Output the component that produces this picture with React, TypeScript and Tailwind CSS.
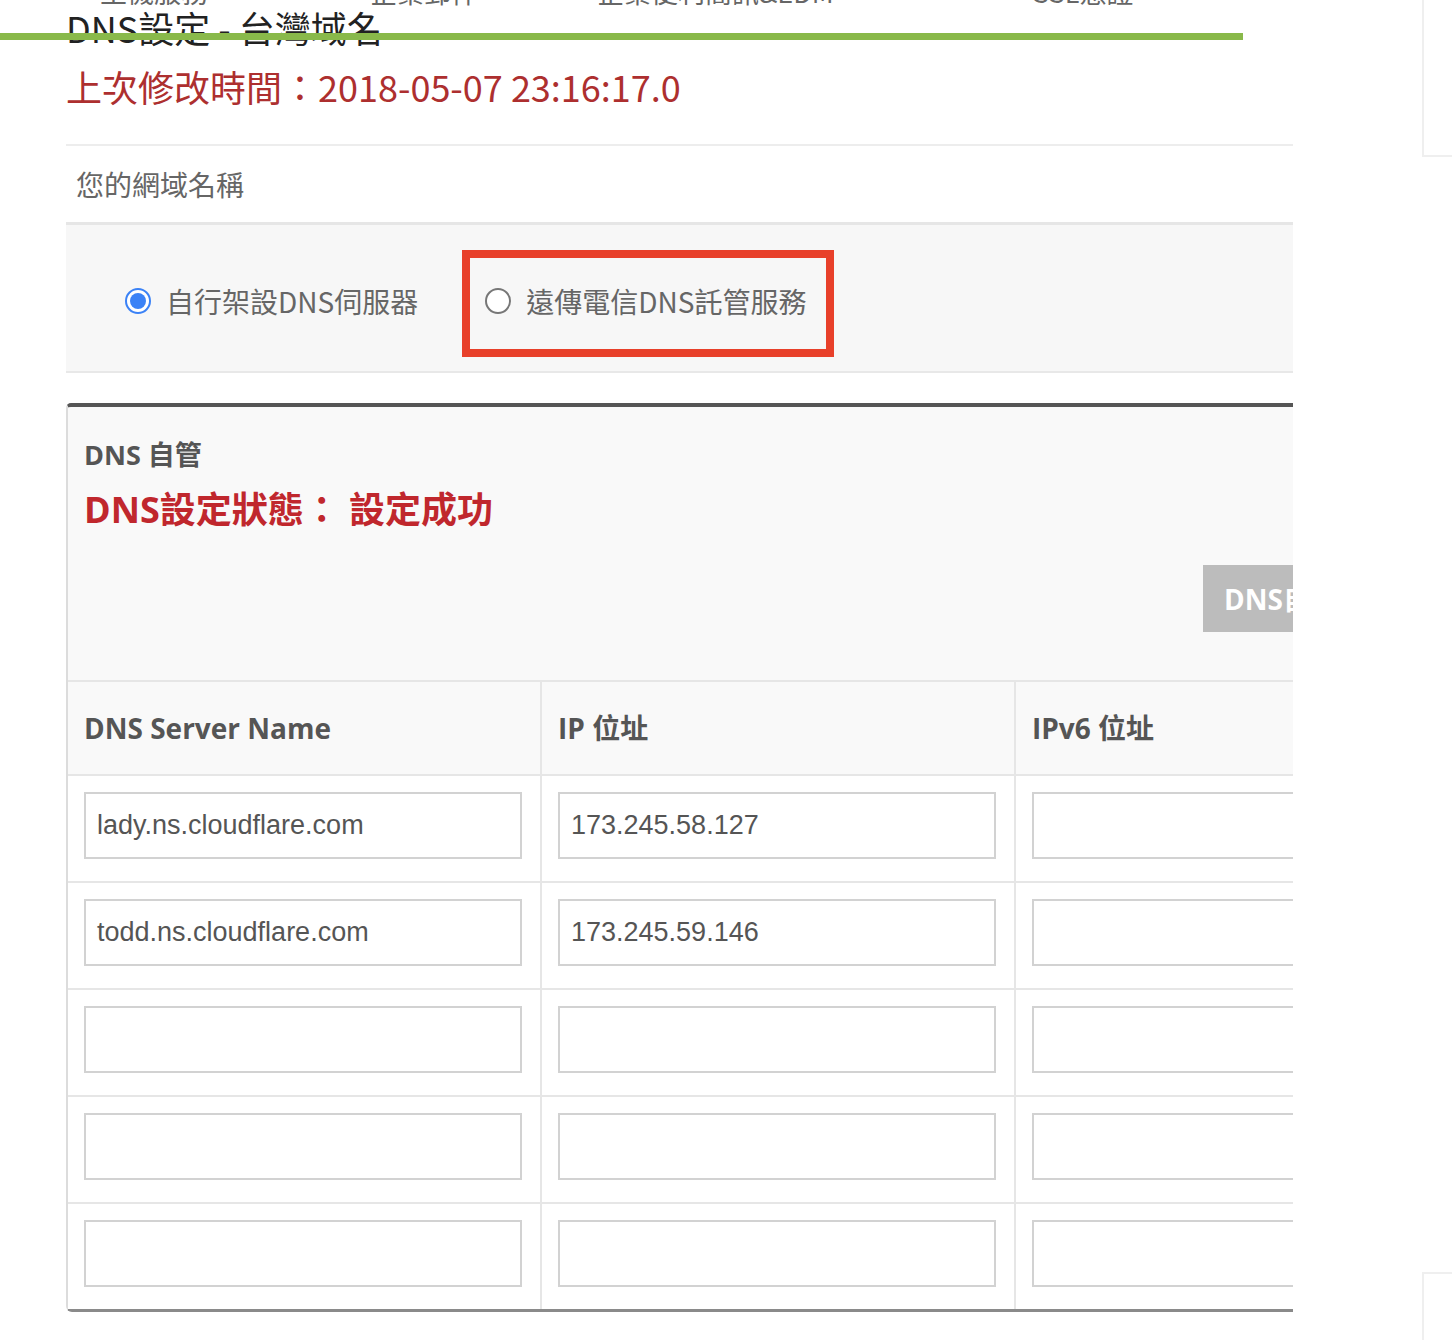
const cjk = { fontFamily: '"Noto Sans CJK TC", "Noto Sans", sans-serif' };
const open = { fontFamily: '"Open Sans", "Noto Sans CJK TC", sans-serif' };
const arial = { fontFamily: '"Liberation Sans", Arial, sans-serif' };

const rows = [
  { name: 'lady.ns.cloudflare.com', ip: '173.245.58.127', ipv6: '' },
  { name: 'todd.ns.cloudflare.com', ip: '173.245.59.146', ipv6: '' },
  { name: '', ip: '', ipv6: '' },
  { name: '', ip: '', ipv6: '' },
  { name: '', ip: '', ipv6: '' },
];

function Field({ value }: { value: string }) {
  return (
    <div
      className="w-[438px] h-[67px] border-2 border-[#d2d2d2] bg-white flex items-center pl-[11px] text-[27px] text-[#555]"
      style={arial}
    >
      {value}
    </div>
  );
}

export default function App() {
  return (
    <div className="w-[1452px] h-[1340px] overflow-hidden bg-white flex">
      <div className="w-[1293px] shrink-0 overflow-hidden">
        {/* nav scrolled mostly out of view */}
        <div className="h-[6px] overflow-hidden" style={cjk}>
          <div className="-mt-[22px] h-[27px] flex text-[27px] leading-[27px] text-[#666] pl-[100px] whitespace-nowrap">
            <span className="w-[270px]">主機服務</span>
            <span className="w-[227px]">企業郵件</span>
            <span className="w-[436px]">企業便利簡訊&amp;EDM</span>
            <span>SSL憑證</span>
          </div>
        </div>

        <div className="h-[27px] pl-[66px] pt-[3px]">
          <h1 className="text-[36px] leading-[36px] text-[#222] whitespace-nowrap" style={cjk}>
            DNS設定 - 台灣域名
          </h1>
        </div>
        <div className="relative w-[1243px] h-[7px] bg-[#89b94a]" />

        <div className="pl-[66px] w-[1700px]">
          <p className="mt-[26px] text-[36px] leading-[40px] text-[#ad2f2f]" style={cjk}>
            上次修改時間：2018-05-07 23:16:17.0
          </p>

          <div className="mt-[38px] border-t-2 border-[#ededed]" />
          <div className="h-[76px] flex items-center pl-[10px] text-[28px] text-[#666]" style={cjk}>
            您的網域名稱
          </div>
          <div className="border-t-[3px] border-[#e6e6e6]" />

          <div
            className="h-[148px] bg-[#f7f7f7] border-b-2 border-[#e8e8e8] flex items-center pl-[59px] pt-[5px]"
            style={cjk}
          >
            <label className="flex items-center gap-[15px] text-[28px] text-[#666]">
              <span className="w-[26px] h-[26px] rounded-full border-2 border-[#3b82f6] bg-white flex items-center justify-center">
                <span className="w-[16px] h-[16px] rounded-full bg-[#3b82f6]" />
              </span>
              自行架設DNS伺服器
            </label>
            <label className="ml-[44px] mt-[5px] h-[107px] w-[372px] border-[8px] border-[#e8402a] flex items-center gap-[15px] pl-[15px] pb-[4px] text-[28px] text-[#666]">
              <span className="w-[26px] h-[26px] rounded-full border-2 border-[#777] bg-white" />
              遠傳電信DNS託管服務
            </label>
          </div>

          {/* DNS panel */}
          <div className="mt-[30px] w-[1440px] border-t-4 border-[#555] border-l-2 border-l-[#dcdcdc] border-b-[3px] border-b-[#8a8a8a] rounded-tl-[5px] rounded-bl-[6px] bg-[#f9f9f9]">
            <div className="pl-[16px] pr-[18px] pt-[31px]">
              <div className="text-[27px] leading-[34px] font-bold text-[#555]" style={open}>
                DNS 自管
              </div>
              <div className="mt-[16px] text-[36px] leading-[44px] font-bold text-[#c0272d]" style={open}>
                DNS設定狀態： 設定成功
              </div>
              <div className="mt-[33px] mb-[48px] flex justify-end">
                <button
                  className="w-[285px] h-[67px] bg-[#bcbcbc] text-white font-bold text-[28px] text-left pl-[21px]"
                  style={open}
                >
                  DNS自管設定
                </button>
              </div>
            </div>

            <div className="grid grid-cols-[472px_474px_474px] border-t-2 border-[#e6e6e6] text-[28px] font-bold text-[#555]" style={open}>
              <div className="h-[92px] flex items-center pl-[16px]">DNS Server Name</div>
              <div className="h-[92px] flex items-center pl-[16px] border-l-2 border-[#e6e6e6]">IP 位址</div>
              <div className="h-[92px] flex items-center pl-[16px] border-l-2 border-[#e6e6e6]">IPv6 位址</div>
            </div>

            {rows.map((r, i) => (
              <div key={i} className="grid grid-cols-[472px_474px_474px] border-t-2 border-[#e6e6e6] bg-white">
                <div className="pl-[16px] pt-[16px] pb-[22px]">
                  <Field value={r.name} />
                </div>
                <div className="pl-[16px] pt-[16px] pb-[22px] border-l-2 border-[#e6e6e6]">
                  <Field value={r.ip} />
                </div>
                <div className="pl-[16px] pt-[16px] pb-[22px] border-l-2 border-[#e6e6e6]">
                  <Field value={r.ipv6} />
                </div>
              </div>
            ))}
          </div>
        </div>
      </div>

      <div className="ml-[129px] flex-1 flex flex-col justify-between">
        <div className="h-[157px] border-l-2 border-b-2 border-[#efefef]" />
        <div className="h-[68px] border-l-2 border-t-2 border-[#efefef]" />
      </div>
    </div>
  );
}
